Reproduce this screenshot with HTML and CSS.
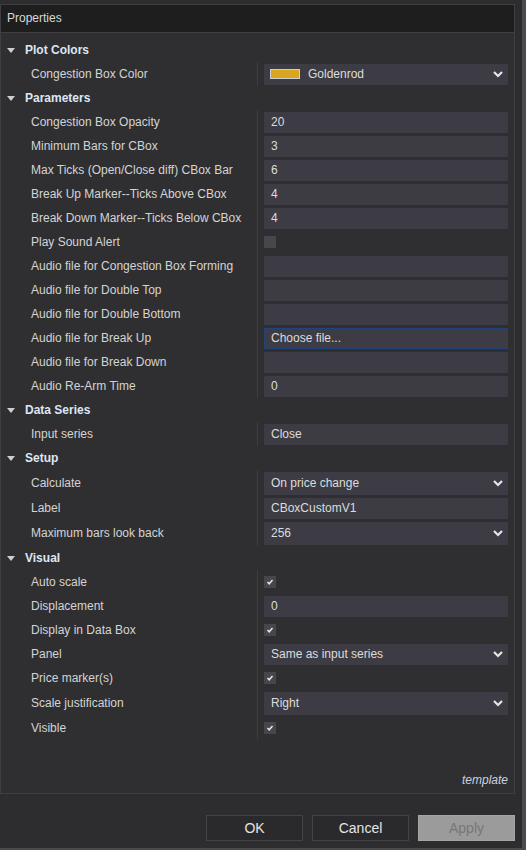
FILE: index.html
```html
<!DOCTYPE html>
<html lang="en">
<head>
    <meta charset="UTF-8">
    <title>Properties</title>
    <link rel="stylesheet" href="styles.css">
</head>
<body>
    <div class="window">
        <div class="panel">
            <div class="panel-title">Properties</div>

            <div class="grid">
                <div class="category">Plot Colors</div>
                <div class="group">
                    <div class="prop">
                        <div class="name">Congestion Box Color</div>
                        <div class="value">
                            <div class="field select">
                                <span class="swatch"></span>Goldenrod
                                <svg class="chevron" viewBox="0 0 10 7"><polyline points="1,1 5,5 9,1"/></svg>
                            </div>
                        </div>
                    </div>
                </div>

                <div class="category">Parameters</div>
                <div class="group">
                    <div class="prop"><div class="name">Congestion Box Opacity</div><div class="value"><div class="field">20</div></div></div>
                    <div class="prop"><div class="name">Minimum Bars for CBox</div><div class="value"><div class="field">3</div></div></div>
                    <div class="prop"><div class="name">Max Ticks (Open/Close diff) CBox Bar</div><div class="value"><div class="field">6</div></div></div>
                    <div class="prop"><div class="name">Break Up Marker--Ticks Above CBox</div><div class="value"><div class="field">4</div></div></div>
                    <div class="prop"><div class="name">Break Down Marker--Ticks Below CBox</div><div class="value"><div class="field">4</div></div></div>
                    <div class="prop"><div class="name">Play Sound Alert</div><div class="value"><span class="check"></span></div></div>
                    <div class="prop"><div class="name">Audio file for Congestion Box Forming</div><div class="value"><div class="field"></div></div></div>
                    <div class="prop"><div class="name">Audio file for Double Top</div><div class="value"><div class="field"></div></div></div>
                    <div class="prop"><div class="name">Audio file for Double Bottom</div><div class="value"><div class="field"></div></div></div>
                    <div class="prop"><div class="name">Audio file for Break Up</div><div class="value"><div class="field focused">Choose file...</div></div></div>
                    <div class="prop"><div class="name">Audio file for Break Down</div><div class="value"><div class="field"></div></div></div>
                    <div class="prop"><div class="name">Audio Re-Arm Time</div><div class="value"><div class="field">0</div></div></div>
                </div>

                <div class="category">Data Series</div>
                <div class="group">
                    <div class="prop"><div class="name">Input series</div><div class="value"><div class="field">Close</div></div></div>
                </div>

                <div class="category">Setup</div>
                <div class="group">
                    <div class="prop tall">
                        <div class="name">Calculate</div>
                        <div class="value"><div class="field select">On price change<svg class="chevron" viewBox="0 0 10 7"><polyline points="1,1 5,5 9,1"/></svg></div></div>
                    </div>
                    <div class="prop"><div class="name">Label</div><div class="value"><div class="field">CBoxCustomV1</div></div></div>
                    <div class="prop tall">
                        <div class="name">Maximum bars look back</div>
                        <div class="value"><div class="field select">256<svg class="chevron" viewBox="0 0 10 7"><polyline points="1,1 5,5 9,1"/></svg></div></div>
                    </div>
                </div>

                <div class="category">Visual</div>
                <div class="group">
                    <div class="prop"><div class="name">Auto scale</div><div class="value"><span class="check checked"><svg viewBox="0 0 12 12"><polyline points="3.5,6 5.2,7.8 8.5,4"/></svg></span></div></div>
                    <div class="prop"><div class="name">Displacement</div><div class="value"><div class="field">0</div></div></div>
                    <div class="prop"><div class="name">Display in Data Box</div><div class="value"><span class="check checked"><svg viewBox="0 0 12 12"><polyline points="3.5,6 5.2,7.8 8.5,4"/></svg></span></div></div>
                    <div class="prop">
                        <div class="name">Panel</div>
                        <div class="value"><div class="field select">Same as input series<svg class="chevron" viewBox="0 0 10 7"><polyline points="1,1 5,5 9,1"/></svg></div></div>
                    </div>
                    <div class="prop"><div class="name">Price marker(s)</div><div class="value"><span class="check checked"><svg viewBox="0 0 12 12"><polyline points="3.5,6 5.2,7.8 8.5,4"/></svg></span></div></div>
                    <div class="prop tall">
                        <div class="name">Scale justification</div>
                        <div class="value"><div class="field select">Right<svg class="chevron" viewBox="0 0 10 7"><polyline points="1,1 5,5 9,1"/></svg></div></div>
                    </div>
                    <div class="prop"><div class="name">Visible</div><div class="value"><span class="check checked"><svg viewBox="0 0 12 12"><polyline points="3.5,6 5.2,7.8 8.5,4"/></svg></span></div></div>
                </div>
            </div>

            <div class="template">template</div>
        </div>

        <div class="buttons">
            <button class="btn">OK</button>
            <button class="btn">Cancel</button>
            <button class="btn disabled">Apply</button>
        </div>
    </div>
</body>
</html>
```

FILE: styles.css
```css
* {
    box-sizing: border-box;
}

body {
    margin: 0;
    background-color: #2d2d30;
    font-family: 'Liberation Sans', Arial, sans-serif;
    font-size: 12px;
    color: #d4d4d4;
}

.window {
    width: 526px;
    height: 850px;
    padding-top: 4px;
    border-right: 4px solid #4b4b4f;
    border-bottom: 2px solid #4b4b4f;
}

.panel {
    width: 515px;
    height: 790px;
    border: 1px solid #3f3f43;
    background-color: #2f2f31;
    display: flex;
    flex-direction: column;
}

.panel-title {
    height: 28px;
    line-height: 27px;
    padding-left: 6px;
    background-color: #1e1e1f;
    border-bottom: 1px solid #3f3f43;
    color: #d8d8d8;
}

.grid {
    flex: 1;
    padding-top: 5px;
}

.category {
    height: 24px;
    display: flex;
    align-items: center;
    padding-left: 6px;
    font-weight: bold;
    color: #dde6f4;
}

.category::before {
    content: "";
    border-left: 4px solid transparent;
    border-right: 4px solid transparent;
    border-top: 5px solid #cfcfcf;
    margin-right: 10px;
}

.prop {
    display: grid;
    grid-template-columns: 256px 1fr;
    height: 24px;
}

.prop.tall {
    height: 26px;
}

.name {
    padding-left: 30px;
    align-self: center;
    white-space: nowrap;
}

.value {
    border-left: 1px solid #3d3d41;
    padding: 0 6px;
    display: flex;
    align-items: center;
}

.field {
    width: 100%;
    height: 21px;
    padding-left: 7px;
    background-color: #3d3c44;
    color: #dcdcdc;
    display: flex;
    align-items: center;
}

.tall .field {
    height: 23px;
}

.field.focused {
    border: 1px solid #22427c;
    padding-left: 6px;
}

.select {
    position: relative;
}

.swatch {
    width: 30px;
    height: 10px;
    margin-left: -1px;
    margin-right: 8px;
    background-color: #daa520;
    border: 1px solid #cfcfcf;
}

.chevron {
    position: absolute;
    right: 5px;
    top: 50%;
    width: 10px;
    height: 7px;
    margin-top: -3px;
    fill: none;
    stroke: #e6e6e6;
    stroke-width: 2.2;
}

.check {
    width: 12px;
    height: 12px;
    background-color: #47464d;
    display: block;
}

.check svg {
    display: block;
    width: 12px;
    height: 12px;
    fill: none;
    stroke: #e8e8e8;
    stroke-width: 1.5;
}

.template {
    text-align: right;
    padding: 0 6px 6px 0;
    font-style: italic;
    color: #c9d2e2;
}

.buttons {
    display: flex;
    justify-content: flex-end;
    gap: 9px;
    margin-top: 21px;
    padding-right: 7px;
}

.btn {
    width: 97px;
    height: 26px;
    border: 1px solid #434346;
    background-color: #2a2a2c;
    color: #e4e4e4;
    font-family: 'Liberation Sans', Arial, sans-serif;
    font-size: 14px;
}

.btn.disabled {
    background-color: #9b9b9b;
    border-color: #a5a5a5;
    color: #777;
}
```
